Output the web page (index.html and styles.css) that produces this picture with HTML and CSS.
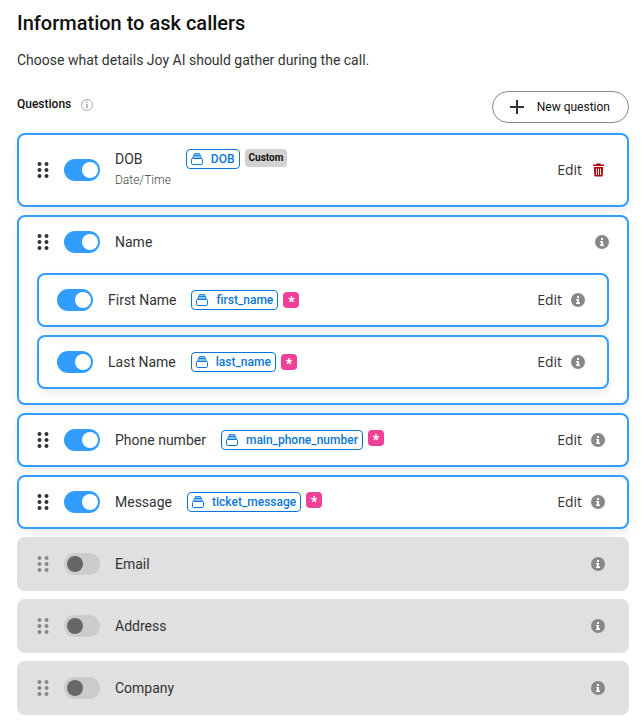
FILE: index.html
```html
<!DOCTYPE html>
<html lang="en">
<head>
<meta charset="utf-8">
<meta name="viewport" content="width=device-width, initial-scale=1">
<title>Information to ask callers</title>
<link rel="stylesheet" href="styles.css">
</head>
<body>
<svg class="sprite" aria-hidden="true">
  <symbol id="grip" viewBox="0 0 12 16">
    <circle cx="2.5" cy="2" r="2"/><circle cx="9.5" cy="2" r="2"/>
    <circle cx="2.5" cy="8" r="2"/><circle cx="9.5" cy="8" r="2"/>
    <circle cx="2.5" cy="14" r="2"/><circle cx="9.5" cy="14" r="2"/>
  </symbol>
  <symbol id="info" viewBox="0 0 14 14">
    <circle cx="7" cy="7" r="7"/>
    <path fill="#fff" d="M6 3h2v2H6zM5 6h3v3.500h1V11H5V9.500h1V7.200H5z"/>
  </symbol>
  <symbol id="variable" viewBox="0 0 12 12">
    <path fill="#8cc0ee" d="M3.500.5h5L10.500 5h-9z"/>
    <path fill="none" stroke="currentColor" stroke-width=".8" d="M3.500.5h5L10.700 5.500M3.500.5 1.300 5.500M2.700 2.500h6.600"/>
    <path fill="#fff" stroke="currentColor" d="M1.500 5.500h9a1 1 0 0 1 1 1v3.700a1.300 1.300 0 0 1-1.300 1.300H1.800A1.300 1.300 0 0 1 .5 10.200V6.500a1 1 0 0 1 1-1z"/>
  </symbol>
</svg>
<main class="page">
  <h1 class="title">Information to ask callers</h1>
  <p class="intro">Choose what details Joy AI should gather during the call.</p>
  <div class="toolbar">
    <h2 class="section">Questions</h2>
    <svg class="hint" viewBox="0 0 12 12" aria-hidden="true"><circle cx="6" cy="6" r="5.500" fill="none" stroke="currentColor"/><path fill="currentColor" d="M5.300 2.500h1.400v1.400H5.300zM4.800 5h1.900v3.500h.6v.8H4.700v-.8h.6V5.800h-.5z"/></svg>
    <button class="new" type="button">
      <svg class="plus" viewBox="0 0 14 14" aria-hidden="true"><path d="M7 0v14M0 7h14" stroke="currentColor" stroke-width="2"/></svg>
      New question
    </button>
  </div>

  <div class="list">
    <section class="card">
      <div class="row">
        <button class="grip" type="button" aria-label="Move DOB"><svg><use href="#grip"/></svg></button>
        <input class="toggle" type="checkbox" id="dob" checked>
        <div class="details">
          <div class="names"><label class="name" for="dob">DOB</label><span class="kind">Date/Time</span></div>
          <span class="tag"><svg><use href="#variable"/></svg>DOB</span>
          <span class="custom">Custom</span>
        </div>
        <button class="edit" type="button">Edit</button>
        <button class="icon trash" type="button" aria-label="Delete DOB"><svg viewBox="0 0 14 14"><path fill="currentColor" fill-rule="evenodd" d="M5 1.500 5.500.5h4l.5 1h3v1.500H2V1.500zM2.800 4h9.400l-.6 8.600a1 1 0 0 1-1 .9H4.400a1 1 0 0 1-1-.9zM5 5.500V12h.9V5.500zm2.050 0V12h.9V5.500zm2.050 0V12h.9V5.500z"/></svg></button>
      </div>
    </section>

    <section class="card group">
      <div class="row">
        <button class="grip" type="button" aria-label="Move Name"><svg><use href="#grip"/></svg></button>
        <input class="toggle" type="checkbox" id="name" checked>
        <div class="details"><label class="name" for="name">Name</label></div>
        <button class="icon" type="button" aria-label="About Name"><svg><use href="#info"/></svg></button>
      </div>
      <div class="nested">
        <div class="card">
          <div class="row">
            <input class="toggle" type="checkbox" id="first" checked>
            <div class="details">
              <label class="name" for="first">First Name</label>
              <span class="tag"><svg><use href="#variable"/></svg>first_name</span>
              <span class="required">*</span>
            </div>
            <button class="edit" type="button">Edit</button>
            <button class="icon" type="button" aria-label="About First Name"><svg><use href="#info"/></svg></button>
          </div>
        </div>
        <div class="card">
          <div class="row">
            <input class="toggle" type="checkbox" id="last" checked>
            <div class="details">
              <label class="name" for="last">Last Name</label>
              <span class="tag"><svg><use href="#variable"/></svg>last_name</span>
              <span class="required">*</span>
            </div>
            <button class="edit" type="button">Edit</button>
            <button class="icon" type="button" aria-label="About Last Name"><svg><use href="#info"/></svg></button>
          </div>
        </div>
      </div>
    </section>

    <section class="card">
      <div class="row">
        <button class="grip" type="button" aria-label="Move Phone number"><svg><use href="#grip"/></svg></button>
        <input class="toggle" type="checkbox" id="phone" checked>
        <div class="details">
          <label class="name" for="phone">Phone number</label>
          <span class="tag"><svg><use href="#variable"/></svg>main_phone_number</span>
          <span class="required">*</span>
        </div>
        <button class="edit" type="button">Edit</button>
        <button class="icon" type="button" aria-label="About Phone number"><svg><use href="#info"/></svg></button>
      </div>
    </section>

    <section class="card">
      <div class="row">
        <button class="grip" type="button" aria-label="Move Message"><svg><use href="#grip"/></svg></button>
        <input class="toggle" type="checkbox" id="message" checked>
        <div class="details">
          <label class="name" for="message">Message</label>
          <span class="tag"><svg><use href="#variable"/></svg>ticket_message</span>
          <span class="required">*</span>
        </div>
        <button class="edit" type="button">Edit</button>
        <button class="icon" type="button" aria-label="About Message"><svg><use href="#info"/></svg></button>
      </div>
    </section>

    <section class="card off">
      <div class="row">
        <button class="grip" type="button" aria-label="Move Email"><svg><use href="#grip"/></svg></button>
        <input class="toggle" type="checkbox" id="email">
        <div class="details"><label class="name" for="email">Email</label></div>
        <button class="icon" type="button" aria-label="About Email"><svg><use href="#info"/></svg></button>
      </div>
    </section>

    <section class="card off">
      <div class="row">
        <button class="grip" type="button" aria-label="Move Address"><svg><use href="#grip"/></svg></button>
        <input class="toggle" type="checkbox" id="address">
        <div class="details"><label class="name" for="address">Address</label></div>
        <button class="icon" type="button" aria-label="About Address"><svg><use href="#info"/></svg></button>
      </div>
    </section>

    <section class="card off">
      <div class="row">
        <button class="grip" type="button" aria-label="Move Company"><svg><use href="#grip"/></svg></button>
        <input class="toggle" type="checkbox" id="company">
        <div class="details"><label class="name" for="company">Company</label></div>
        <button class="icon" type="button" aria-label="About Company"><svg><use href="#info"/></svg></button>
      </div>
    </section>
  </div>
</main>
</body>
</html>
```

FILE: styles.css
```css
* {
  box-sizing: border-box;
}

body {
  margin: 0;
  background: #fff;
  color: #333;
  font: 14px/20px Roboto, sans-serif;
}

button {
  padding: 0;
  border: 0;
  background: none;
  color: inherit;
  font: inherit;
  cursor: pointer;
}

svg {
  display: block;
}

.sprite {
  display: none;
}

.page {
  padding: 11px 12px 12px 17px;
}

.title {
  margin: 0;
  color: #111;
  font-size: 20px;
  font-weight: 500;
  line-height: 24px;
}

.intro {
  margin: 15px 0 21px;
}

.toolbar {
  display: flex;
  align-items: center;
  margin-bottom: 10px;
}

.section {
  margin: 0;
  padding-bottom: 6px;
  color: #111;
  font-size: 12px;
  font-weight: 500;
}

.hint {
  width: 12px;
  height: 12px;
  margin: 0 auto 4px 10px;
  color: #aaa;
}

.new {
  display: flex;
  align-items: center;
  gap: 13px;
  height: 32px;
  padding: 0 18px 0 17px;
  border: 1px solid #888;
  border-radius: 16px;
  color: #111;
  font-size: 12px;
}

.plus {
  width: 14px;
  height: 14px;
  color: #333;
}

.list,
.nested {
  display: flex;
  flex-direction: column;
  gap: 8px;
}

.nested {
  padding: 6px 18px 14px;
}

.card {
  border: 2px solid #339dff;
  border-radius: 8px;
  background: #fff;
  box-shadow: 0 4px 8px rgba(0, 0, 0, 0.08);
}

.row {
  display: flex;
  align-items: center;
  min-height: 50px;
  padding: 14px 22px 14px 18px;
}

.group > .row {
  padding-right: 18px;
}

.grip {
  margin-right: 15px;
  color: #333;
}

.grip svg {
  width: 12px;
  height: 16px;
  fill: currentColor;
}

.toggle {
  appearance: none;
  display: flex;
  align-items: center;
  flex: none;
  width: 36px;
  height: 22px;
  margin: 0 15px 0 0;
  padding: 0 3px;
  border-radius: 11px;
  background: #ccc;
  cursor: pointer;
}

.toggle::before {
  content: "";
  width: 16px;
  height: 16px;
  border-radius: 50%;
  background: #666;
}

.toggle:checked {
  justify-content: flex-end;
  padding: 0 2px;
  background: #339dff;
}

.toggle:checked::before {
  background: #fff;
}

.details {
  display: flex;
  align-items: flex-start;
  flex: 1;
}

.nested .details {
  align-items: center;
}

.names {
  display: flex;
  flex-direction: column;
}

.kind {
  color: #444;
  font-size: 12px;
  font-weight: 300;
  line-height: 22px;
}

.tag {
  display: flex;
  align-items: center;
  gap: 8px;
  height: 20px;
  margin: 0 5px 0 15px;
  padding: 0 4px;
  border: 1px solid #0b76d8;
  border-radius: 4px;
  color: #0b76d8;
  font-size: 12px;
  font-weight: 500;
}

.tag svg {
  width: 12px;
  height: 12px;
}

.custom {
  padding: 0 4px;
  border-radius: 4px;
  background: #d2d2d2;
  color: #111;
  font-size: 10px;
  font-weight: 700;
  line-height: 18px;
}

.required {
  width: 16px;
  height: 16px;
  border-radius: 4px;
  background: #ee4197;
  color: #fff;
  font-size: 14px;
  font-weight: 700;
  line-height: 20px;
  text-align: center;
}

.edit {
  margin-right: 9px;
  font-family: "Open Sans", sans-serif;
}

.icon svg {
  width: 14px;
  height: 14px;
  fill: #888;
}

.trash {
  color: #b3000c;
}

.off {
  border-color: #e0e0e0;
  background: #e0e0e0;
  box-shadow: none;
}

.off .grip {
  color: #888;
}
```
